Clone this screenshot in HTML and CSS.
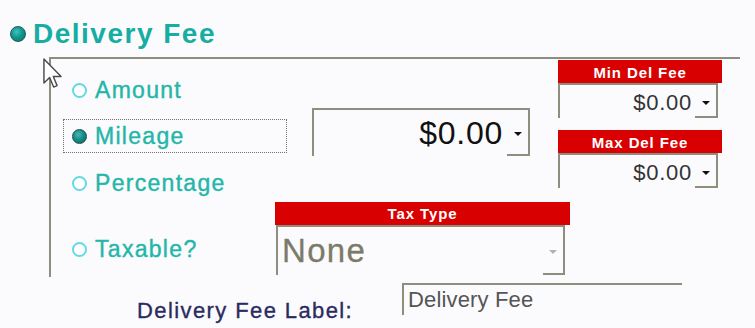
FILE: index.html
```html
<!DOCTYPE html>
<html>
<head>
<meta charset="utf-8">
<link rel="stylesheet" href="styles.css">
</head>
<body>
<div class="heading"><span class="bullet"></span><h1 class="title">Delivery Fee</h1></div>
<div class="group">
  <div class="col radios">
    <div class="radio"><span class="dot"></span><span class="rlabel">Amount</span></div>
    <div class="radio focused r2"><span class="dot on"></span><span class="rlabel">Mileage</span></div>
    <div class="radio r3"><span class="dot"></span><span class="rlabel">Percentage</span></div>
    <div class="radio r4"><span class="dot"></span><span class="rlabel">Taxable?</span></div>
  </div>
  <div class="col middle">
    <div class="combo big">
      <div class="val">$0.00</div>
      <div class="btn"><span class="arrow"></span></div>
    </div>
    <div class="field tax">
      <div class="cap">Tax Type</div>
      <div class="combo taxcombo">
        <div class="val">None</div>
        <div class="btn"><span class="arrow dis"></span></div>
      </div>
    </div>
  </div>
  <div class="col right">
    <div class="field small">
      <div class="cap sm">Min Del Fee</div>
      <div class="combo smcombo">
        <div class="val">$0.00</div>
        <div class="btn"><span class="arrow"></span></div>
      </div>
    </div>
    <div class="field small second">
      <div class="cap sm">Max Del Fee</div>
      <div class="combo smcombo">
        <div class="val">$0.00</div>
        <div class="btn"><span class="arrow"></span></div>
      </div>
    </div>
  </div>
</div>
<div class="label-row">
  <span class="lbl">Delivery Fee Label:</span>
  <div class="textbox">Delivery Fee</div>
</div>
<svg class="cursor" width="19" height="31" viewBox="0 0 12 19.5" xmlns="http://www.w3.org/2000/svg">
  <path d="M0.6 0.6 L0.6 15.8 L4.2 12.3 L6.7 18.3 L8.9 17.4 L6.5 11.6 L11.4 11.6 Z" fill="#ffffff" stroke="#4a4a4a" stroke-width="0.9" stroke-linejoin="round"/>
</svg>
</body>
</html>
```
FILE: styles.css
```css
* { box-sizing: border-box; }
html, body {
  margin: 0;
  padding: 0;
  background: #fbfbfe;
}
body {
  width: 755px;
  height: 328px;
  overflow: hidden;
  font-family: "Liberation Sans", Arial, sans-serif;
}

.heading {
  display: flex;
  align-items: center;
  padding-top: 18px;
  height: 50px;
}
.bullet {
  width: 16px;
  height: 16px;
  margin-left: 10px;
  border-radius: 50%;
  background: radial-gradient(circle at 40% 35%, #3fc2bc 0%, #139690 45%, #0b6d69 100%);
  border: 1px solid #125e5a;
}
.title {
  margin: 0 0 0 7px;
  font-size: 28px;
  line-height: 32px;
  font-weight: bold;
  letter-spacing: 1.5px;
  color: #16aea2;
}

.group {
  margin-top: 7px;
  margin-left: 49px;
  width: 691px;
  height: 220px;
  border-top: 2px solid #8e8e7e;
  border-left: 2px solid #8e8e7e;
  display: flex;
  align-items: flex-start;
}
.col { display: flex; flex-direction: column; flex-shrink: 0; }

.radios {
  width: 224px;
  margin-left: 12px;
  padding-top: 14px;
}
.radio {
  display: flex;
  align-items: center;
  height: 34px;
  padding: 0 8px;
  border: 1px dotted transparent;
}
.radio.focused { border-color: #707070; }
.r2 { margin-top: 12px; }
.r3 { margin-top: 13px; }
.r4 { margin-top: 32px; }
.dot {
  width: 15px;
  height: 15px;
  flex-shrink: 0;
  border-radius: 50%;
  border: 2px solid #63d9e3;
  background: #ffffff;
}
.dot.on {
  border: 1px solid #1f4c4a;
  background: radial-gradient(circle at 40% 35%, #46b9b3 0%, #148e89 45%, #0b625f 100%);
}
.rlabel {
  margin-left: 8px;
  font-size: 23px;
  letter-spacing: 1.3px;
  color: #24b6a9;
  -webkit-text-stroke: 0.4px #24b6a9;
  white-space: nowrap;
}

.middle {
  width: 283px;
  margin-left: -12px;
}
.combo { display: flex; flex-shrink: 0; }
.combo .val {
  flex: 1;
  display: flex;
  align-items: center;
  justify-content: flex-end;
  border-top: 2px solid #8e8e7e;
  border-left: 2px solid #8e8e7e;
  white-space: nowrap;
}
.combo .btn {
  width: 23px;
  display: flex;
  align-items: center;
  justify-content: center;
  border-top: 2px solid #8e8e7e;
  border-right: 2px solid #8e8e7e;
  border-bottom: 2px solid #8e8e7e;
}
.arrow {
  width: 0;
  height: 0;
  border-left: 4px solid transparent;
  border-right: 4px solid transparent;
  border-top: 4px solid #111111;
}
.arrow.dis { border-top-color: #b4b4a6; }

.big {
  margin-top: 49px;
  margin-left: 37px;
  width: 218px;
  height: 48px;
}
.big .val {
  padding-right: 4px;
  font-size: 32px;
  letter-spacing: 0.75px;
  color: #111111;
}
.big .arrow { margin-top: 4px; }

.field { display: flex; flex-direction: column; flex-shrink: 0; }
.cap {
  height: 23px;
  background: #d80000;
  color: #ffffff;
  font-weight: bold;
  font-size: 15px;
  line-height: 23px;
  letter-spacing: 0.9px;
  text-align: center;
  white-space: nowrap;
}
.cap.sm { padding-top: 2px; line-height: 21px; }

.tax {
  margin-top: 46px;
  width: 295px;
}
.taxcombo {
  margin-left: 1px;
  width: 289px;
  height: 50px;
}
.taxcombo .val {
  justify-content: flex-start;
  padding-left: 4px;
  font-size: 33px;
  letter-spacing: 1.3px;
  color: #7b7b69;
  -webkit-text-stroke: 0.3px #7b7b69;
}
.taxcombo .btn { width: 22px; }
.taxcombo .arrow { margin-top: 3px; }

.right { width: 164px; }
.small { margin-top: 1px; width: 164px; }
.small.second { margin-top: 12px; }
.smcombo {
  width: 160px;
  height: 35px;
}
.smcombo .val {
  padding-right: 3px;
  padding-top: 3px;
  font-size: 22px;
  letter-spacing: 0.75px;
  color: #333333;
}
.smcombo .arrow { margin-top: 4px; }

.label-row {
  display: flex;
  margin-top: 6px;
  padding-left: 137px;
}
.lbl {
  width: 265px;
  flex-shrink: 0;
  margin-top: 15px;
  font-size: 22px;
  line-height: 26px;
  letter-spacing: 1.4px;
  color: #2b2b5e;
  -webkit-text-stroke: 0.35px #2b2b5e;
  white-space: nowrap;
}
.textbox {
  width: 280px;
  height: 32px;
  display: flex;
  align-items: center;
  padding-left: 4px;
  border-top: 2px solid #8e8e7e;
  border-left: 2px solid #8e8e7e;
  font-size: 22px;
  letter-spacing: 0.15px;
  color: #555555;
}

.cursor {
  position: absolute;
  left: 43px;
  top: 58px;
}
```
